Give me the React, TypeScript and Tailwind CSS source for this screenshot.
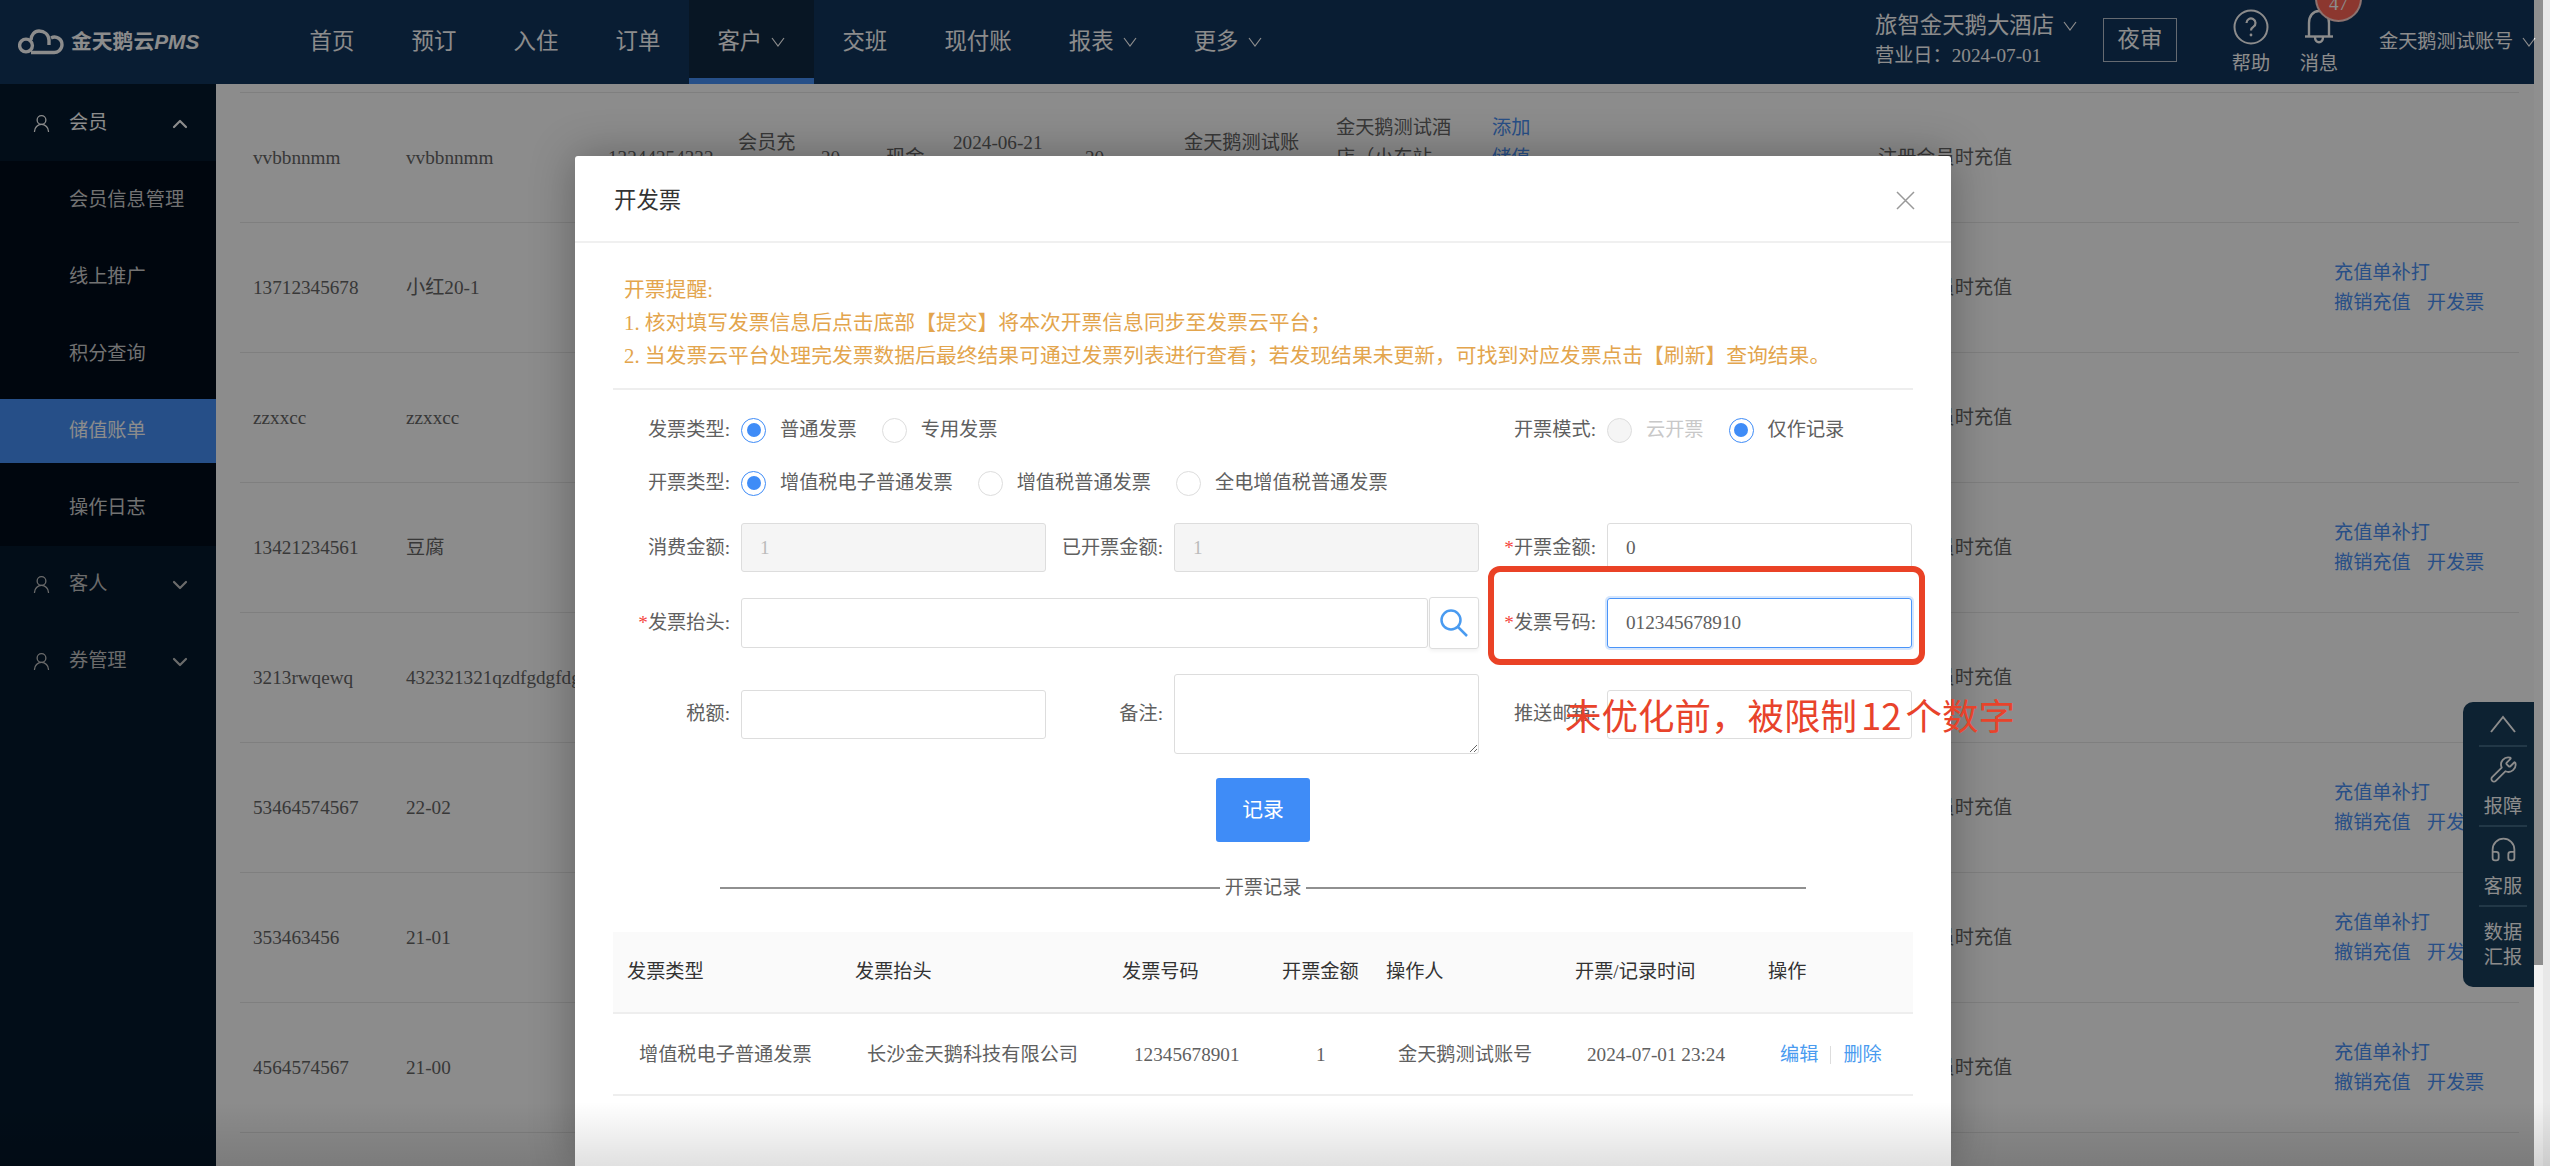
import { ChevronDown, ChevronUp, Headphones, UserRound, Wrench } from 'lucide-react';

const NAV = [
  { label: '首页' },
  { label: '预订' },
  { label: '入住' },
  { label: '订单' },
  { label: '客户', caret: true, active: true },
  { label: '交班' },
  { label: '现付账' },
  { label: '报表', caret: true },
  { label: '更多', caret: true },
];

const SUB_MENU = ['会员信息管理', '线上推广', '积分查询', '储值账单', '操作日志'];

const ROWS = [
  { card: 'vvbbnnmm', name: 'vvbbnnmm', actions: false },
  { card: '13712345678', name: '小红20-1', actions: true },
  { card: 'zzxxcc', name: 'zzxxcc', actions: false },
  { card: '13421234561', name: '豆腐', actions: true },
  { card: '3213rwqewq', name: '432321321qzdfgdgfdgfdg', actions: false },
  { card: '53464574567', name: '22-02', actions: true },
  { card: '353463456', name: '21-01', actions: true },
  { card: '4564574567', name: '21-00', actions: true },
];

function Caret() {
  return (
    <svg width="14" height="10" viewBox="0 0 14 10" fill="none" stroke="currentColor" strokeWidth="1.2" className="ml-[9px] shrink-0">
      <path d="M1 1l6 8 6-8" />
    </svg>
  );
}

function Logo() {
  return (
    <svg width="46" height="26" viewBox="0 0 46 26" fill="none" stroke="#fff" strokeWidth="3.4">
      <circle cx="8" cy="16.5" r="6.4" />
      <path d="M13 23.5h22a8 8 0 0 0 9-7.5 7.5 7.5 0 0 0-11-7 " />
      <path d="M13 11c0-5 3.5-9 8-9 5.5 0 9.5 3.5 10 9v5" />
    </svg>
  );
}

function Header() {
  return (
    <div className="flex h-[84px] items-stretch bg-[#12355d] text-white">
      <div className="flex w-[281px] items-center pl-[18px]">
        <Logo />
        <span className="ml-[7px] font-['Liberation_Sans','Noto_Sans_CJK_SC',sans-serif] text-[20.8px] font-bold">
          金天鹅云<span className="italic">PMS</span>
        </span>
      </div>
      {NAV.map((n) => (
        <div
          key={n.label}
          className={
            n.active
              ? 'flex items-center border-b-[6px] border-[#4590f8] bg-[#0f2842] px-[28.6px] pt-[6px] text-[22.4px]'
              : 'flex items-center px-[28.6px] text-[22.4px]'
          }
        >
          {n.label}
          {n.caret && <Caret />}
        </div>
      ))}
      <div className="ml-auto flex">
        <div className="w-[228px] pt-[12px]">
          <div className="flex h-[28px] items-center text-[22.4px]">
            旅智金天鹅大酒店
            <Caret />
          </div>
          <div className="mt-[2px] text-[19.2px] leading-[28px]">营业日：2024-07-01</div>
        </div>
        <div className="mt-[18px] flex h-[44px] w-[74px] items-center justify-center border border-white/70 text-[22.4px]">
          夜审
        </div>
        <div className="ml-[44px] flex w-[60px] flex-col items-center pt-[9px]">
          <svg width="36" height="36" viewBox="0 0 36 36" fill="none" stroke="#fff" strokeWidth="2">
            <circle cx="18" cy="18" r="16.5" />
            <path d="M13.5 14a4.5 4.5 0 1 1 7 3.7c-1.6 1-2.5 2-2.5 3.8" strokeWidth="2.2" />
            <circle cx="18" cy="26" r="1.4" fill="#fff" stroke="none" />
          </svg>
          <span className="mt-[7px] text-[19.2px] leading-[24px]">帮助</span>
        </div>
        <div className="relative ml-[8px] flex w-[60px] flex-col items-center pt-[9px]">
          <svg width="30" height="36" viewBox="0 0 30 36" fill="none" stroke="#fff" strokeWidth="2.4">
            <path d="M5 27V14C5 7 9 2 15 2s10 5 10 12v13" />
            <path d="M1 27.5h28" />
            <path d="M11 28c0 7 8 7 8 0" />
          </svg>
          <span className="mt-[7px] text-[19.2px] leading-[24px]">消息</span>
          <div className="absolute -top-[25px] left-[26px] flex h-[47px] w-[47px] items-end justify-center rounded-full border-2 border-white/70 bg-[#ff6456] pb-[4px] text-[19.2px] leading-[24px]">
            47
          </div>
        </div>
        <div className="ml-[30px] flex w-[155px] items-center whitespace-nowrap text-[19.2px]">
          金天鹅测试账号
          <Caret />
        </div>
      </div>
    </div>
  );
}

function Sidebar() {
  return (
    <div className="h-[1082px] w-[216px] shrink-0 bg-[#04182c] text-[19.2px]">
      <div className="flex h-[77px] items-center pl-[31px] pr-[24px] pt-[2px] text-white">
        <UserRound size={21} strokeWidth={1.5} />
        <span className="ml-[17px]">会员</span>
        <ChevronUp size={24} strokeWidth={2.2} className="ml-auto" />
      </div>
      <div className="bg-[#000b1b]">
        {SUB_MENU.map((m) => (
          <div key={m} className="py-[6.5px]">
            <div
              className={
                m === '储值账单'
                  ? 'flex h-[64px] items-center bg-[#4590f8] pl-[69px] pt-[2px] text-white'
                  : 'flex h-[64px] items-center pl-[69px] pt-[2px] text-[#d0d0d0]'
              }
            >
              {m}
            </div>
          </div>
        ))}
      </div>
      {['客人', '券管理'].map((m) => (
        <div key={m} className="flex h-[77px] items-center pl-[31px] pr-[24px] text-[#c4c4c4]">
          <UserRound size={21} strokeWidth={1.5} />
          <span className="ml-[17px]">{m}</span>
          <ChevronDown size={24} strokeWidth={2.2} className="ml-auto" />
        </div>
      ))}
    </div>
  );
}

function RecordTable() {
  return (
    <div className="flex-1 pl-[24px] pr-[15px] pt-[8px] text-[19.2px] leading-[30px] text-[#666]">
      <div className="border-t border-[#e8e8e8]">
        {ROWS.map((r, i) => (
          <div
            key={r.card}
            className="grid h-[130px] grid-cols-[153px_202px_130px_83px_65px_67px_132px_99px_152px_156px_386px_456px_198px] items-center border-b border-[#e8e8e8] whitespace-nowrap [&>div]:pl-[13px]"
          >
            <div>{r.card}</div>
            <div>{r.name}</div>
            <div>{i === 0 && '13244254332'}</div>
            <div>
              {i === 0 && (
                <>
                  会员充
                  <br />值
                </>
              )}
            </div>
            <div>{i === 0 && '20'}</div>
            <div>{i === 0 && '现金'}</div>
            <div>
              {i === 0 && (
                <>
                  2024-06-21
                  <br />
                  15:20
                </>
              )}
            </div>
            <div>{i === 0 && '20'}</div>
            <div>
              {i === 0 && (
                <>
                  金天鹅测试账
                  <br />号
                </>
              )}
            </div>
            <div>
              {i === 0 && (
                <>
                  金天鹅测试酒
                  <br />
                  店（小东站
                  <br />
                  店）
                </>
              )}
            </div>
            <div className="text-[#4a90f5]">
              {i === 0 && (
                <>
                  添加
                  <br />
                  储值
                  <br />
                  发票
                </>
              )}
            </div>
            <div>注册会员时充值</div>
            <div className="text-[#4a90f5]">
              {r.actions && (
                <>
                  充值单补打
                  <br />
                  <span className="mr-[16px]">撤销充值</span>开发票
                </>
              )}
            </div>
          </div>
        ))}
      </div>
    </div>
  );
}

function FloatPanel() {
  return (
    <div className="absolute left-[2463px] top-[702px] flex h-[285px] w-[71px] flex-col items-center rounded-l-[10px] bg-[#183e5b] pl-[9px] text-[19.2px] leading-[24px] text-white">
      <div className="flex h-[43px] items-center">
        <svg width="26" height="18" viewBox="0 0 26 18" fill="none" stroke="#fff" strokeWidth="2">
          <path d="M1 17L13 2l12 15" />
        </svg>
      </div>
      <div className="h-[2px] w-[48px] bg-[#3f6682]" />
      <div className="flex h-[78px] flex-col items-center pt-[8px]">
        <Wrench size={29} strokeWidth={1.5} />
        <span className="mt-[11px]">报障</span>
      </div>
      <div className="h-[2px] w-[48px] bg-[#3f6682]" />
      <div className="flex h-[78px] flex-col items-center pt-[8px]">
        <Headphones size={29} strokeWidth={1.5} />
        <span className="mt-[11px]">客服</span>
      </div>
      <div className="h-[2px] w-[48px] bg-[#3f6682]" />
      <div className="pt-[13px] text-center leading-[25px]">
        数据
        <br />
        汇报
      </div>
    </div>
  );
}

function Radio({ label, checked, disabled }: { label: string; checked?: boolean; disabled?: boolean }) {
  return (
    <div className={disabled ? 'mr-[25px] flex items-center text-[#c8c8c8]' : 'mr-[25px] flex items-center'}>
      <span
        className={
          checked
            ? 'flex h-[25px] w-[25px] items-center justify-center rounded-full border border-[#3f8cf7]'
            : disabled
              ? 'h-[25px] w-[25px] rounded-full border border-[#ddd] bg-[#f5f5f5]'
              : 'h-[25px] w-[25px] rounded-full border border-[#ddd]'
        }
      >
        {checked && <span className="h-[14px] w-[14px] rounded-full bg-[#3f8cf7]" />}
      </span>
      <span className="ml-[14px]">{label}</span>
    </div>
  );
}

function Label({ text, required }: { text: string; required?: boolean }) {
  return (
    <div className="mr-[11px] w-[117px] shrink-0 text-right">
      {required && <span className="text-[#f5453d]">*</span>}
      {text}:
    </div>
  );
}

function Field({ label, value, required, disabled }: { label: string; value?: string; required?: boolean; disabled?: boolean }) {
  return (
    <div className="flex items-center">
      <Label text={label} required={required} />
      <input
        readOnly
        value={value ?? ''}
        className={
          disabled
            ? 'h-[49px] w-[305px] rounded-[3px] border border-[#ddd] bg-[#f5f5f5] pl-[18px] text-[#bbb] outline-none'
            : 'h-[49px] w-[305px] rounded-[3px] border border-[#ddd] bg-white pl-[18px] outline-none'
        }
      />
    </div>
  );
}

function InvoiceModal() {
  return (
    <div className="absolute left-[575px] top-[156px] h-[1010px] w-[1376px] overflow-hidden rounded-t-[3px] bg-white text-[19.2px] leading-[30px] text-[#606060] shadow-[0_0_45px_rgba(0,0,0,0.3)]">
      <div className="flex h-[87px] items-center border-b-2 border-[#f0f0f0] pl-[39px] pr-[36px] pt-[4px]">
        <span className="text-[22.4px] text-[#333]">开发票</span>
        <svg width="19" height="19" viewBox="0 0 19 19" fill="none" stroke="#999" strokeWidth="1.5" className="ml-auto">
          <path d="M1 1l17 17M18 1L1 18" />
        </svg>
      </div>
      <div className="pl-[38px]">
        <div className="h-[147px] w-[1300px] border-b-2 border-[#eee] pl-[11px] pt-[30px] text-[20.8px] leading-[33px] text-[#e3a54d]">
          <div>开票提醒:</div>
          <div>1. 核对填写发票信息后点击底部【提交】将本次开票信息同步至发票云平台；</div>
          <div>2. 当发票云平台处理完发票数据后最终结果可通过发票列表进行查看；若发现结果未更新，可找到对应发票点击【刷新】查询结果。</div>
        </div>
        <div className="mt-[15px] grid grid-cols-[866px_433px]">
          <div className="flex h-[50px] items-center">
            <Label text="发票类型" />
            <Radio label="普通发票" checked />
            <Radio label="专用发票" />
          </div>
          <div className="flex h-[50px] items-center">
            <Label text="开票模式" />
            <Radio label="云开票" disabled />
            <Radio label="仅作记录" checked />
          </div>
        </div>
        <div className="mt-[3px] flex h-[50px] items-center">
          <Label text="开票类型" />
          <Radio label="增值税电子普通发票" checked />
          <Radio label="增值税普通发票" />
          <Radio label="全电增值税普通发票" />
        </div>
        <div className="mt-[15px] grid grid-cols-[433px_433px_433px]">
          <Field label="消费金额" value="1" disabled />
          <Field label="已开票金额" value="1" disabled />
          <Field label="开票金额" value="0" required />
        </div>
        <div className="mt-[25px] grid grid-cols-[866px_433px]">
          <div className="flex items-center">
            <Label text="发票抬头" required />
            <input readOnly className="h-[50px] w-[687px] rounded-[3px] border border-[#ddd] outline-none" />
            <div className="ml-[1px] flex h-[52px] w-[50px] items-center justify-center rounded-[3px] border border-[#ddd] shadow-[0_2px_4px_rgba(0,0,0,0.06)]">
              <svg width="28" height="28" viewBox="0 0 28 28" fill="none" stroke="#4a9bf0" strokeWidth="2.5">
                <circle cx="11" cy="11" r="9.5" />
                <path d="M18 18l9 9" />
              </svg>
            </div>
          </div>
          <div className="flex items-center">
            <Label text="发票号码" required />
            <input
              readOnly
              value="012345678910"
              className="h-[50px] w-[305px] rounded-[3px] border border-[#4a94f8] pl-[18px] shadow-[0_0_0_2px_#d5e6fd] outline-none"
            />
          </div>
        </div>
        <div className="mt-[25px] grid grid-cols-[433px_433px_433px] items-center">
          <Field label="税额" />
          <div className="flex items-center">
            <Label text="备注" />
            <textarea readOnly className="h-[80px] w-[305px] rounded-[3px] border border-[#ddd] outline-none" />
          </div>
          <Field label="推送邮箱" />
        </div>
        <div className="ml-[603px] mt-[24px] flex h-[64px] w-[94px] items-center justify-center rounded-[3px] bg-[#3f8cf7] text-[20.8px] text-white">
          记录
        </div>
        <div className="ml-[107px] mt-[33px] flex h-[26px] w-[1086px] items-center">
          <div className="h-[2px] flex-1 bg-[#909090]" />
          <span className="px-[5px]">开票记录</span>
          <div className="h-[2px] flex-1 bg-[#909090]" />
        </div>
        <div className="mt-[31px] w-[1300px]">
          <div className="grid h-[82px] grid-cols-[228px_267px_160px_104px_189px_193px_159px] items-center border-b-2 border-[#eee] bg-[#fafafa] text-[#333] [&>div]:pl-[14px]">
            <div>发票类型</div>
            <div>发票抬头</div>
            <div>发票号码</div>
            <div>开票金额</div>
            <div>操作人</div>
            <div>开票/记录时间</div>
            <div>操作</div>
          </div>
          <div className="grid h-[82px] grid-cols-[228px_267px_160px_104px_189px_193px_159px] items-center border-b-2 border-[#eee] pt-[2px] whitespace-nowrap [&>div]:pl-[26px]">
            <div>增值税电子普通发票</div>
            <div>长沙金天鹅科技有限公司</div>
            <div>12345678901</div>
            <div>
              <span className="ml-[22px]">1</span>
            </div>
            <div>金天鹅测试账号</div>
            <div>2024-07-01 23:24</div>
            <div className="flex items-center text-[#4a9bf0]">
              编辑
              <span className="mx-[12px] h-[18px] w-[1px] bg-[#ddd]" />
              删除
            </div>
          </div>
        </div>
      </div>
    </div>
  );
}

export default function App() {
  return (
    <div className="relative flex h-[1166px] w-[2550px] overflow-hidden bg-[#e8e8e8] font-['Liberation_Serif','Noto_Sans_CJK_SC',serif]">
      <div className="relative w-[2534px] shrink-0 bg-white">
        <Header />
        <div className="flex">
          <Sidebar />
          <RecordTable />
        </div>
        <FloatPanel />
        <div className="absolute inset-0 bg-black/45" />
      </div>
      <div className="w-[16px]">
        <div className="h-[965px] w-[9px] bg-[#8f8f8f]" />
        <div className="h-[201px] w-[9px] bg-[#f2f2f2]" />
      </div>
      <InvoiceModal />
      <div className="pointer-events-none absolute bottom-0 left-0 h-[64px] w-[2550px] bg-gradient-to-b from-transparent to-black/12" />
      <div className="absolute left-[1488px] top-[566px] h-[99px] w-[437px] rounded-[12px] border-[6px] border-[#ea4226]" />
      <div className="absolute left-[1565px] top-[690px] whitespace-nowrap font-['Noto_Sans_CJK_SC',sans-serif] text-[36.5px] leading-[50px] text-[#e8432b]">
        未优化前，被限制<span className="mx-[4px]">12</span>个数字
      </div>
    </div>
  );
}
